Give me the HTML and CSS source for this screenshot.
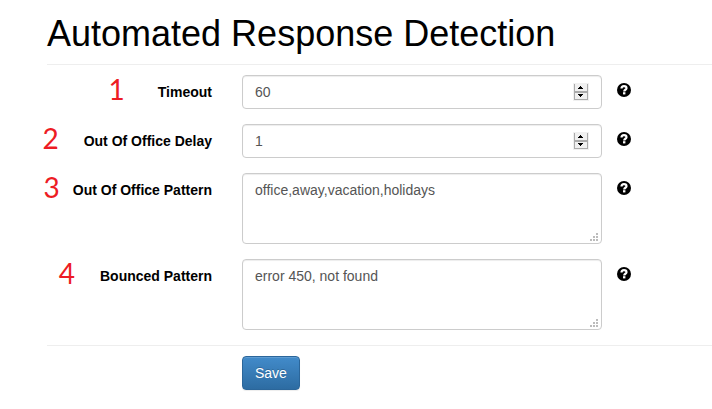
FILE: index.html
```html
<!DOCTYPE html>
<html lang="en">
<head>
  <meta charset="UTF-8">
  <meta name="viewport" content="width=device-width, initial-scale=1.0">
  <title>Automated Response Detection</title>
  <link rel="stylesheet" href="styles.css">
</head>
<body>

<!-- shared icons -->
<svg class="sprite" aria-hidden="true">
  <symbol id="help" viewBox="0 0 14 14">
    <circle cx="7" cy="7" r="7" fill="#000"/>
    <path d="M4.500 5.600C4.500 4 5.500 3.200 7 3.200S9.500 4 9.500 5.200C9.500 6.800 7.200 6.700 7.200 8.500" fill="none" stroke="#fff" stroke-width="2.200"/>
    <path d="M6 9.200h2.400v2.200H6z" fill="#fff"/>
  </symbol>
  <symbol id="spinner" viewBox="0 0 16 18">
    <path d="M0 0h16v18H0z" fill="#f0f0f0"/>
    <path d="M1 1h1v16H1zM14 1h1v16h-1zM1 8h14v2H1zM1 16h14v1H1z" fill="#ababab"/>
    <path d="M5 6h5v-1h-1v-1h-1v-1h-1v1h-1v1h-1zM5 11h5v1h-1v1h-1v1h-1v-1h-1v-1h-1z" fill="#000"/>
  </symbol>
  <symbol id="grip" viewBox="0 0 8 8">
    <path d="M6 0h2v2H6zM3 3h2v2H3zM6 3h2v2H6zM0 6h2v2H0zM3 6h2v2H3zM6 6h2v2H6z" fill="#bcbcbc"/>
  </symbol>
</svg>

<main class="container">
  <h1 class="page-header">Automated Response Detection</h1>

  <form>
    <div class="form-group">
      <div class="label-col">
        <span class="step step-far">1</span>
        <label for="timeout">Timeout</label>
      </div>
      <div class="field">
        <input type="number" class="form-control" id="timeout" value="60">
        <svg class="spinner" aria-hidden="true"><use href="#spinner"/></svg>
      </div>
      <svg class="help" role="img" aria-label="Help"><use href="#help"/></svg>
    </div>

    <div class="form-group">
      <div class="label-col">
        <span class="step">2</span>
        <label for="delay">Out Of Office Delay</label>
      </div>
      <div class="field">
        <input type="number" class="form-control" id="delay" value="1">
        <svg class="spinner" aria-hidden="true"><use href="#spinner"/></svg>
      </div>
      <svg class="help" role="img" aria-label="Help"><use href="#help"/></svg>
    </div>

    <div class="form-group">
      <div class="label-col">
        <span class="step step-near">3</span>
        <label for="pattern">Out Of Office Pattern</label>
      </div>
      <div class="field">
        <textarea class="form-control" id="pattern">office,away,vacation,holidays</textarea>
        <svg class="grip" aria-hidden="true"><use href="#grip"/></svg>
      </div>
      <svg class="help" role="img" aria-label="Help"><use href="#help"/></svg>
    </div>

    <div class="form-group">
      <div class="label-col">
        <span class="step">4</span>
        <label for="bounced">Bounced Pattern</label>
      </div>
      <div class="field">
        <textarea class="form-control" id="bounced">error 450, not found</textarea>
        <svg class="grip" aria-hidden="true"><use href="#grip"/></svg>
      </div>
      <svg class="help" role="img" aria-label="Help"><use href="#help"/></svg>
    </div>

    <div class="form-actions">
      <button type="button" class="btn">Save</button>
    </div>
  </form>
</main>

</body>
</html>
```
FILE: styles.css
```css
* {
  box-sizing: border-box;
}
body {
  margin: 0;
  font-family: "Liberation Sans", Arial, sans-serif;
  font-size: 14px;
  line-height: 20px;
  color: #000;
  background-color: #fff;
}
.sprite {
  position: absolute;
  width: 0;
  height: 0;
}
.container {
  padding: 14px 0 14px 47px;
}
.page-header {
  margin: 0 0 10px;
  padding-bottom: 10px;
  border-bottom: 1px solid #eee;
  font-size: 36px;
  font-weight: normal;
  line-height: 40px;
}

/* form rows */
.form-group {
  display: grid;
  grid-template-columns: 165px minmax(0, 360px) 14px;
  column-gap: 30px;
  margin-bottom: 15px;
  align-items: start;
}
.label-col {
  display: flex;
  justify-content: flex-end;
  align-items: flex-start;
  white-space: nowrap;
}
.label-col label {
  padding-top: 7px;
  font-weight: bold;
}
.step {
  margin-right: 25px;
  font-family: Lato, sans-serif;
  font-size: 28px;
  line-height: 28px;
  color: #ed1c24;
}
.step-far {
  margin-right: 33px;
}
.step-near {
  margin-right: 13px;
}
.field {
  position: relative;
}
.form-control {
  display: block;
  width: 100%;
  height: 34px;
  margin: 0;
  padding: 6px 12px;
  border: 1px solid #ccc;
  border-radius: 4px;
  background-color: #fff;
  box-shadow: inset 0 1px 1px rgba(0, 0, 0, 0.075);
  font: inherit;
  color: #555;
}
textarea.form-control {
  height: 71px;
  resize: none;
}
input[type="number"] {
  appearance: textfield;
}
input[type="number"]::-webkit-inner-spin-button {
  appearance: none;
  margin: 0;
}
.spinner {
  position: absolute;
  top: 8px;
  right: 13px;
  width: 16px;
  height: 18px;
  pointer-events: none;
}
.grip {
  position: absolute;
  right: 4px;
  bottom: 3px;
  width: 8px;
  height: 8px;
  pointer-events: none;
}
.help {
  width: 14px;
  height: 14px;
  margin-top: 8px;
  margin-left: -15px;
}

/* footer */
.form-actions {
  padding: 10px 0 0 195px;
  border-top: 1px solid #eee;
}
.btn {
  padding: 6px 12px;
  border: 1px solid #2b669a;
  border-radius: 4px;
  background-image: linear-gradient(#428bca, #2d6ca2);
  box-shadow: inset 0 1px 0 rgba(255, 255, 255, 0.15), 0 1px 1px rgba(0, 0, 0, 0.075);
  font: inherit;
  color: #fff;
  text-shadow: 0 -1px 0 rgba(0, 0, 0, 0.2);
}
.btn:hover {
  background: #2d6ca2;
}
```
